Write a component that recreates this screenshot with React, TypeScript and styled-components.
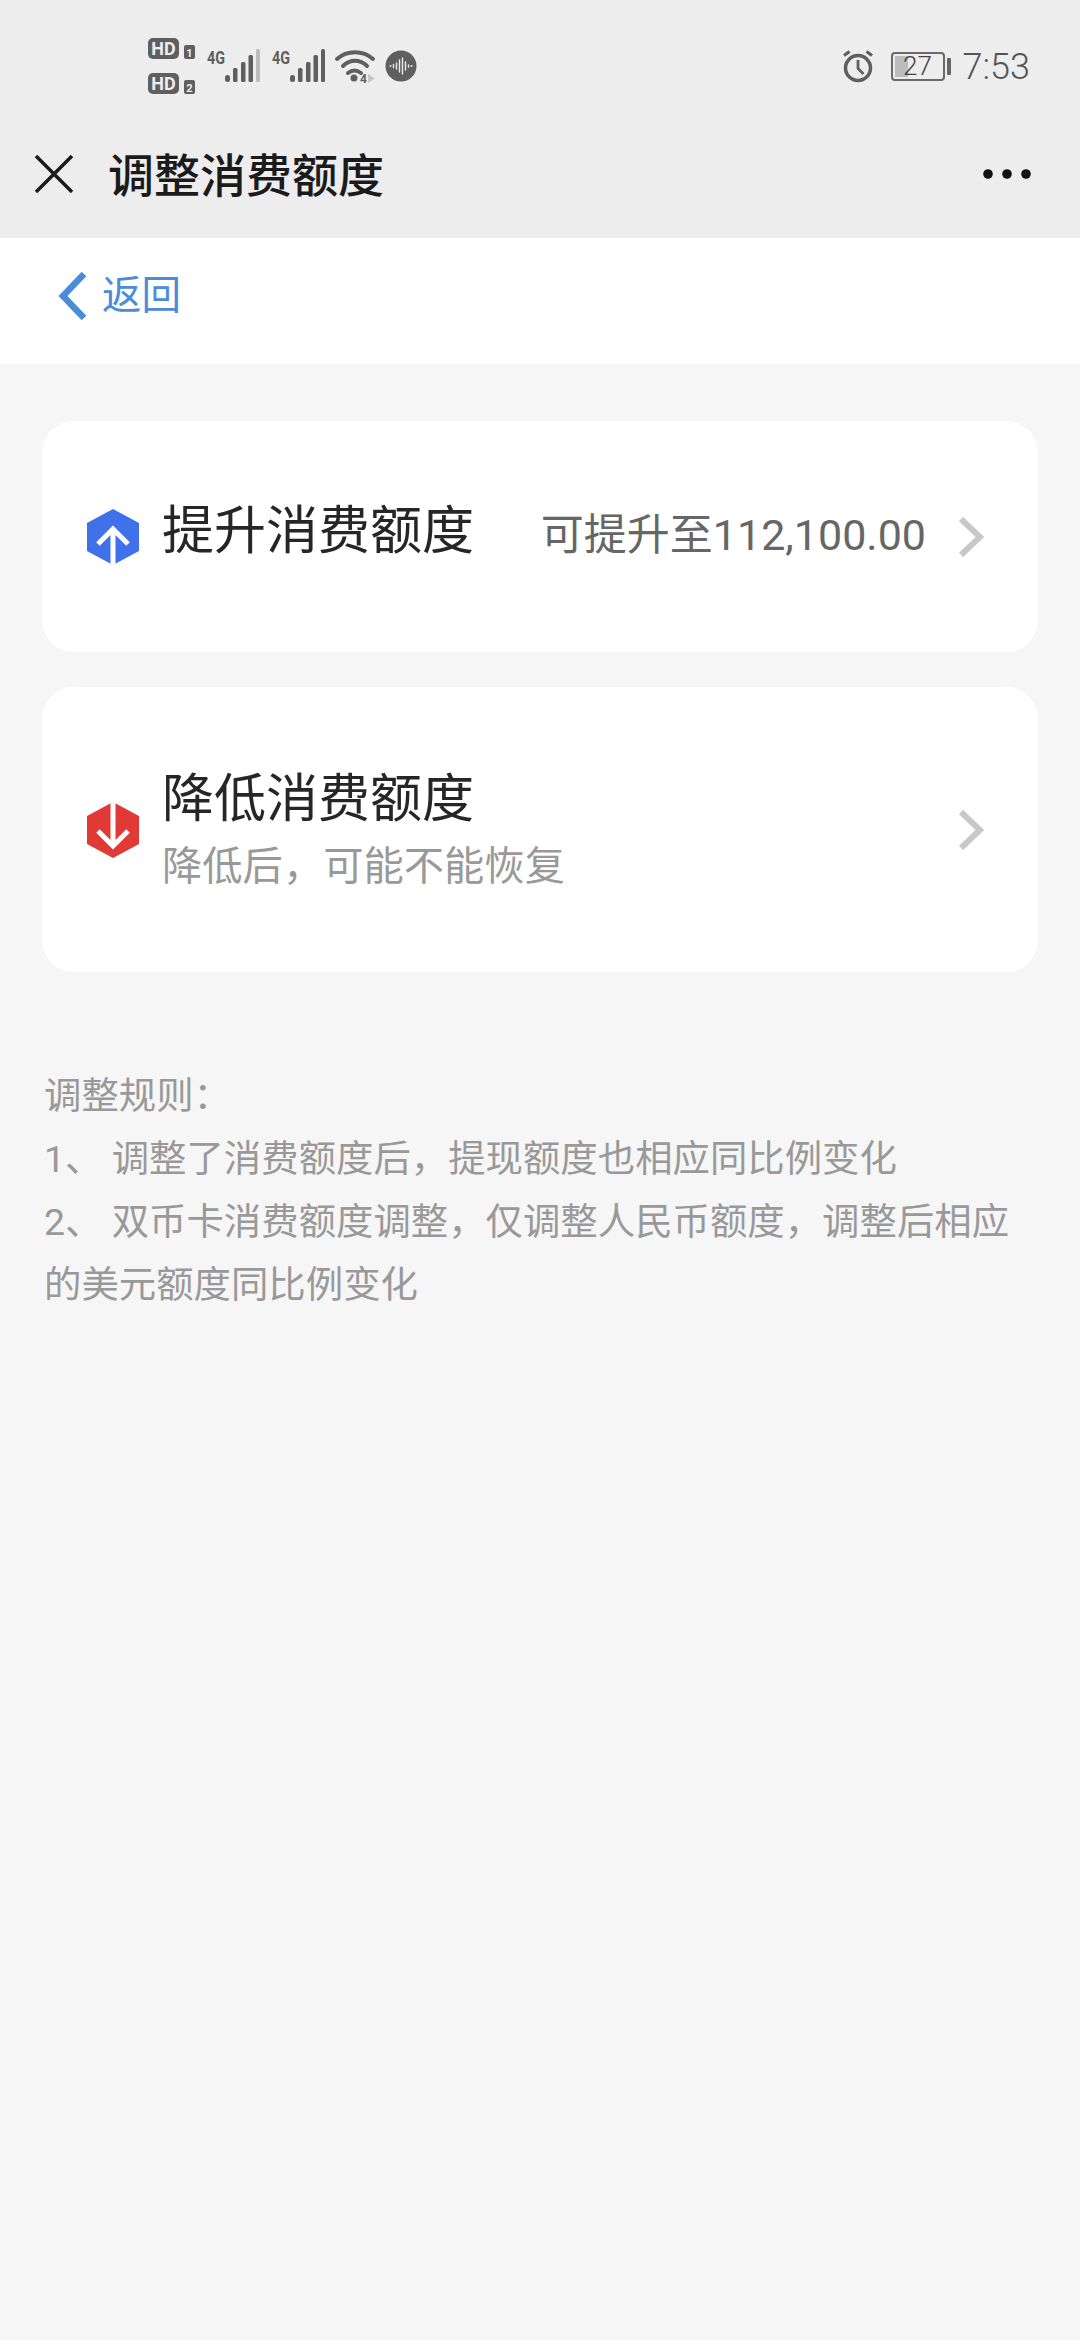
import React from "react";
import styled, { createGlobalStyle } from "styled-components";

const Global = createGlobalStyle`
  html, body { margin: 0; padding: 0; background: #f6f6f6; }
  body { font-family: "Roboto", "Noto Sans CJK SC", sans-serif; }
`;
const Page = styled.div`
  width: 1080px; height: 2340px; background: #f6f6f6; display: flex; flex-direction: column; overflow: hidden;
`;
const Chrome = styled.header`
  height: 238px; background: #ededed; display: flex; flex-direction: column;
`;
const StatusBar = styled.div`
  height: 132px; flex: none; display: flex; align-items: center; justify-content: space-between;
  padding: 0 50px 0 146px; box-sizing: border-box; color: #5f5f5f;
`;
const StatusGroup = styled.div`
  display: flex; align-items: center;
`;
const StatusIcon = styled.svg<{ $ml?: number }>`
  display: block; flex: none; overflow: visible; margin-left: ${p => p.$ml ?? 0}px;
`;
const Clock = styled.span`
  font-size: 36px; font-weight: 300; color: #555; margin-left: 18px; padding-top: 2px;
`;
const Battery = styled.div`
  position: relative; width: 54px; height: 29px; border: 2px solid #6a6a6a; border-radius: 4px;
  box-sizing: border-box; margin-left: 16px; display: flex; align-items: center; justify-content: center;
  font-size: 26px; font-weight: 300; color: #444;
  background: linear-gradient(#bcbcbc, #bcbcbc) no-repeat 2px center / 13px 21px;
  &::after {
    content: ""; position: absolute; right: -8px; top: 4px; width: 4px; height: 17px; background: #666; border-radius: 1px;
  }
`;
const NavBar = styled.div`
  height: 106px; flex: none; display: flex; align-items: center; padding: 0 49px 22px 32px; box-sizing: border-box;
`;
const NavTitle = styled.h1`
  margin: 0 0 0 32px; padding-bottom: 4px; flex: 1; font-size: 46px; font-weight: 500; color: #1b1b1b; line-height: 1;
  font-family: "Noto Sans CJK SC", sans-serif;
`;
const BackRow = styled.div`
  height: 126px; background: #fff; display: flex; align-items: center; padding: 0 0 10px 57px; box-sizing: border-box;
`;
const BackText = styled.span`
  margin-left: 13px; font-size: 39.500px; color: #4a8cd8; line-height: 1;
`;
const Content = styled.main`
  padding: 57px 42px 0; display: flex; flex-direction: column; gap: 35px;
`;
const Card = styled.section<{ $h: number }>`
  height: ${p => p.$h}px; background: #fff; border-radius: 32px; display: flex; align-items: center;
  padding: 0 54px 0 45px; box-sizing: border-box;
`;
const Hex = styled.svg`
  flex: none; width: 52px; height: 56px; margin-right: 23px;
`;
const Body = styled.div<{ $lift: number }>`
  flex: 1; display: flex; flex-direction: column; padding-bottom: ${p => p.$lift}px;
`;
const CardTitle = styled.div`
  font-size: 52px; line-height: 66px; color: #262626; font-family: "Noto Sans CJK SC", sans-serif;
`;
const CardSub = styled.div`
  margin-top: 10px; font-size: 40.300px; line-height: 50px; color: #999; font-family: "Noto Sans CJK SC", sans-serif;
`;
const Value = styled.div`
  font-size: 43px; color: #666; margin-right: 32px; line-height: 1; padding-bottom: 3px;
`;
const Rules = styled.div`
  margin-top: 58px; padding: 0 2px; font-size: 37.400px; line-height: 63px; color: #999;
`;
const RuleLine = styled.div`
  white-space: pre-wrap;
`;

const HD = ({ n, y }: { n: string; y: number }) => (
  <g transform={`translate(2 ${y})`}>
    <rect width="31" height="21" rx="5" fill="#5f5f5f" />
    <text x="15.500" y="17" textAnchor="middle" fontSize="18" fontWeight="700" fill="#ededed" fontFamily="Roboto">HD</text>
    <rect x="36" y="7" width="11" height="14" rx="2" fill="#5f5f5f" />
    <text x="41.500" y="18.500" textAnchor="middle" fontSize="11" fontWeight="700" fill="#ededed" fontFamily="Roboto">{n}</text>
  </g>
);

const Signal = ({ lastMuted, ml }: { lastMuted?: boolean; ml: number }) => (
  <StatusIcon $ml={ml} width="53" height="34" viewBox="0 0 53 34">
    <text x="0" y="15" fontSize="19" fontWeight="700" fill="#5f5f5f" fontFamily="Roboto" textLength="18" lengthAdjust="spacingAndGlyphs">4G</text>
    <g fill="#5f5f5f">
      <rect x="18" y="26" width="5" height="7" rx="2.500" />
      <rect x="26" y="19" width="4.500" height="14" rx="1.500" />
      <rect x="34" y="13" width="4.500" height="20" rx="1.500" />
      <rect x="41.500" y="6" width="4.500" height="27" rx="1.500" />
      <rect x="49" y="0" width="4" height="33" rx="1.500" fill={lastMuted ? "#bcbcbc" : "#5f5f5f"} />
    </g>
  </StatusIcon>
);

const Chevron = () => (
  <svg width="26" height="40" viewBox="0 0 26 40">
    <path d="M3 2L22 20L3 38" stroke="#c8c8c8" strokeWidth="6" fill="none" />
  </svg>
);

export default function App() {
  return (
    <Page>
      <Global />
      <Chrome>
        <StatusBar>
          <StatusGroup>
            <StatusIcon width="50" height="60" viewBox="0 0 50 60">
              <HD n="1" y={2} />
              <HD n="2" y={37} />
            </StatusIcon>
            <Signal lastMuted ml={11} />
            <Signal ml={12} />
            <StatusIcon $ml={10} width="40" height="34" viewBox="0 0 40 34">
              <g fill="none" stroke="#5f5f5f" strokeWidth="4" strokeLinecap="round">
                <path d="M2 10 C12 1 28 1 38 10" />
                <path d="M8 17 C15 10 25 10 32 17" />
                <path d="M13 24 C17 21 22 21 26 24" />
              </g>
              <circle cx="19" cy="29" r="3.500" fill="#5f5f5f" />
              <text x="25" y="34" fontSize="12" fontWeight="700" fill="#5f5f5f" fontFamily="Roboto">4</text>
              <path d="M33 25 L40 29.500 L33 34Z" fill="#c8c8c8" />
            </StatusIcon>
            <StatusIcon $ml={10} width="32" height="32" viewBox="0 0 32 32">
              <circle cx="16" cy="16" r="15.500" fill="#5f5f5f" />
              <g stroke="#ededed" strokeWidth="1.400" strokeLinecap="round">
                <path d="M5 16h1M8.500 14.500v3M11.500 13v6M14.500 10v12M17.500 8v16M20.500 12v8M23.500 15v2M26 16h1" />
              </g>
            </StatusIcon>
          </StatusGroup>
          <StatusGroup>
            <StatusIcon width="34" height="34" viewBox="0 0 34 34">
              <g fill="none" stroke="#5f5f5f">
                <circle cx="17" cy="19" r="12.500" strokeWidth="3.500" />
                <path d="M17 11v8.500l5.500 5.500" strokeWidth="2.800" />
                <path d="M3 6.500L8.500 2.500M31 6.500L25.500 2.500" strokeWidth="3.200" />
              </g>
            </StatusIcon>
            <Battery>27</Battery>
            <Clock>7:53</Clock>
          </StatusGroup>
        </StatusBar>
        <NavBar>
          <svg width="44" height="44" viewBox="0 0 44 44">
            <path d="M4 4L40 40M40 4L4 40" stroke="#1b1b1b" strokeWidth="3.500" fill="none" />
          </svg>
          <NavTitle>调整消费额度</NavTitle>
          <svg width="48" height="12" viewBox="0 0 48 12">
            <circle cx="5" cy="6" r="4.800" fill="#111" />
            <circle cx="24" cy="6" r="4.800" fill="#111" />
            <circle cx="43" cy="6" r="4.800" fill="#111" />
          </svg>
        </NavBar>
      </Chrome>
      <BackRow>
        <svg width="32" height="50" viewBox="0 0 32 50">
          <path d="M27 3L6 25L27 47" stroke="#4a8cd8" strokeWidth="6.500" fill="none" />
        </svg>
        <BackText>返回</BackText>
      </BackRow>
      <Content>
        <Card $h={231}>
          <Hex viewBox="0 0 52 56">
            <path d="M26 0L52 14V42L26 56L0 42V14Z" fill="#3f72ea" />
            <path d="M26 56V21M11 35L26 20L41 35" stroke="#fff" strokeWidth="5" fill="none" />
          </Hex>
          <Body $lift={20}>
            <CardTitle>提升消费额度</CardTitle>
          </Body>
          <Value>可提升至112,100.00</Value>
          <Chevron />
        </Card>
        <Card $h={285}>
          <Hex viewBox="0 0 52 56">
            <path d="M26 0L52 14V42L26 56L0 42V14Z" fill="#e13a36" />
            <path d="M26 0V43M11 29L26 44L41 29" stroke="#fff" strokeWidth="5" fill="none" />
          </Hex>
          <Body $lift={10}>
            <CardTitle>降低消费额度</CardTitle>
            <CardSub>降低后，可能不能恢复</CardSub>
          </Body>
          <Chevron />
        </Card>
        <Rules>
          <RuleLine>调整规则：</RuleLine>
          <RuleLine>1、 调整了消费额度后，提现额度也相应同比例变化</RuleLine>
          <RuleLine>2、 双币卡消费额度调整，仅调整人民币额度，调整后相应的美元额度同比例变化</RuleLine>
        </Rules>
      </Content>
    </Page>
  );
}
